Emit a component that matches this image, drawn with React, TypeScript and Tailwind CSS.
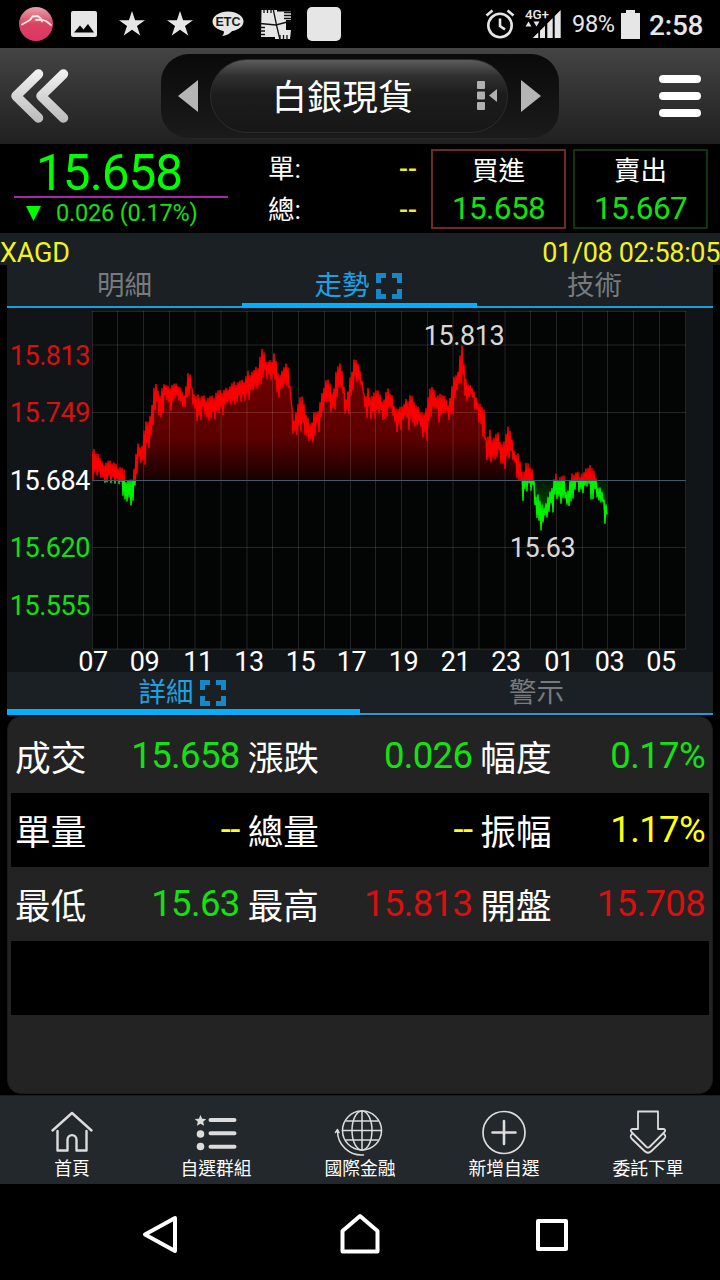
import React from 'react';

type Point = [number, number];

const HIGHS: Point[] = [
  [92, 450], [96, 449], [98, 452], [101, 461], [104, 463], [108, 461], [113, 461], [117, 465], [121, 466], [124, 470],
  [126, 479], [133, 480], [136, 458], [139, 444], [143, 445], [145, 430], [148, 418], [151, 415], [153, 405], [154, 395],
  [156, 382], [158, 390], [160, 402], [162, 390], [163, 382], [166, 385], [168, 389], [170, 384], [177, 384], [180, 387],
  [184, 397], [187, 385], [189, 373], [191, 377], [193, 392], [196, 397], [199, 395], [203, 396], [214, 396], [217, 391],
  [224, 390], [228, 388], [234, 382], [240, 381], [245, 380], [249, 371], [255, 370], [259, 365], [261, 355], [263, 349],
  [266, 360], [270, 362], [273, 358], [274, 351], [276, 360], [277, 375], [280, 373], [284, 369], [287, 364], [289, 365],
  [290, 385], [291, 397], [293, 420], [296, 415], [298, 405], [300, 402], [303, 390], [304, 402], [306, 415], [310, 422],
  [313, 422], [316, 408], [319, 410], [321, 402], [325, 385], [327, 379], [329, 380], [332, 393], [335, 388], [337, 372],
  [339, 362], [341, 361], [343, 380], [345, 395], [348, 400], [350, 380], [354, 370], [355, 357], [358, 364], [360, 368],
  [362, 380], [364, 394], [367, 398], [369, 382], [370, 396], [374, 396], [377, 387], [380, 395], [384, 400], [388, 389],
  [392, 394], [395, 412], [399, 406], [403, 407], [407, 397], [409, 405], [412, 391], [415, 405], [419, 408], [425, 415],
  [427, 400], [431, 388], [434, 387], [436, 397], [440, 395], [443, 393], [447, 402], [450, 402], [452, 390], [456, 373],
  [458, 378], [460, 365], [462, 346], [464, 360], [466, 378], [468, 387], [470, 383], [473, 389], [476, 398], [479, 400],
  [482, 407], [484, 410], [486, 435], [488, 442], [490, 430], [493, 438], [498, 433], [502, 443], [506, 441], [508, 428],
  [509, 422], [511, 438], [513, 442], [515, 453], [518, 453], [520, 462], [525, 472], [527, 463], [530, 465], [533, 470],
  [534, 480], [536, 490], [538, 492], [540, 500], [542, 505], [545, 508], [548, 500], [551, 492], [554, 481], [557, 474],
  [564, 476], [566, 490], [569, 490], [572, 475], [575, 473], [578, 472], [586, 472], [588, 466], [590, 463], [592, 468],
  [595, 473], [597, 478], [598, 488], [603, 488], [605, 507], [608, 503],
];

const LOWS: Point[] = [
  [92, 480], [97, 474], [103, 479], [106, 484], [119, 484], [122, 486], [124, 505], [128, 497], [131, 505], [134, 497],
  [136, 475], [139, 455], [141, 463], [144, 465], [147, 440], [149, 448], [151, 430], [153, 420], [156, 398], [158, 405],
  [160, 430], [162, 415], [164, 400], [167, 400], [170, 411], [173, 403], [175, 393], [179, 400], [182, 405], [184, 408],
  [187, 402], [190, 388], [193, 405], [197, 421], [200, 420], [202, 405], [207, 420], [216, 421], [219, 410], [222, 415],
  [226, 402], [230, 404], [236, 404], [242, 402], [248, 400], [252, 390], [258, 388], [262, 380], [275, 380], [277, 400],
  [282, 387], [287, 385], [289, 390], [291, 410], [292, 432], [294, 438], [298, 433], [304, 430], [306, 440], [313, 442],
  [316, 430], [319, 433], [321, 415], [326, 400], [331, 412], [335, 408], [338, 385], [341, 390], [344, 415], [348, 415],
  [351, 395], [354, 380], [362, 385], [364, 400], [367, 420], [375, 420], [380, 410], [384, 423], [388, 410], [392, 405],
  [394, 430], [397, 433], [401, 430], [404, 412], [409, 430], [411, 415], [415, 430], [418, 415], [421, 437], [427, 442],
  [429, 420], [433, 410], [436, 405], [439, 422], [443, 410], [447, 418], [450, 422], [453, 412], [456, 390], [463, 378],
  [466, 404], [470, 390], [474, 408], [477, 415], [481, 431], [484, 440], [487, 460], [491, 462], [495, 458], [500, 460],
  [503, 473], [507, 460], [511, 455], [515, 465], [518, 484], [521, 478], [523, 504], [526, 493], [533, 490], [535, 505],
  [536, 525], [538, 505], [540, 536], [543, 515], [547, 517], [550, 505], [552, 514], [555, 495], [559, 504], [562, 504],
  [565, 495], [566, 507], [569, 505], [571, 503], [573, 493], [577, 485], [580, 497], [584, 490], [588, 483], [592, 505],
  [594, 483], [597, 500], [600, 500], [603, 510], [605, 525], [608, 507],
];

const valueAt = (points: Point[], x: number) => {
  const i = points.findIndex((p) => p[0] >= x);
  if (i <= 0) return points[0][1];
  const [x0, y0] = points[i - 1];
  const [x1, y1] = points[i];
  return y0 + ((y1 - y0) * (x - x0)) / (x1 - x0);
};

const BASE = 480;

const buildSeries = () => {
  const line: string[] = [];
  const area: string[] = [`92,${BASE}`];
  for (let x = 92; x <= 606; x += 2) {
    const hi = Math.min(valueAt(HIGHS, x), valueAt(HIGHS, x + 1));
    const lo = Math.max(valueAt(LOWS, x), valueAt(LOWS, x + 1));
    const a = ((x * 37) % 11) / 11;
    const b = ((x * 29) % 13) / 13;
    const top = hi + (lo - hi) * a * a * 0.25;
    const bottom = lo - (lo - hi) * b * b * 0.45;
    line.push(`${x},${top.toFixed(1)}`, `${x + 1},${bottom.toFixed(1)}`);
    area.push(`${x},${((top + bottom) / 2).toFixed(1)}`);
  }
  area.push(`607,${BASE}`);
  return { line: line.join(' '), area: area.join(' ') };
};

const series = buildSeries();

const V_LINES = [92.5, 117.5, 143.5, 169.5, 195, 221, 247, 272.5, 298.5, 324.5, 350.5, 375.5, 401.5, 427.5, 453, 479, 505, 530.5, 556.5, 582.5, 607.5, 633.5, 659.5, 685.5];
const H_LINES = [311.5, 345, 412.5, 547.5, 615, 649];

const Y_LABELS = [
  { text: '15.813', y: 365, color: '#d81010' },
  { text: '15.749', y: 422, color: '#d81010' },
  { text: '15.684', y: 490, color: '#ffffff' },
  { text: '15.620', y: 557, color: '#12e012' },
  { text: '15.555', y: 615, color: '#12e012' },
];

const X_LABELS = [
  ['07', 93], ['09', 144.5], ['11', 198], ['13', 249], ['15', 300.5], ['17', 351.5],
  ['19', 403.5], ['21', 455.5], ['23', 506], ['01', 559], ['03', 609.5], ['05', 661],
] as const;

const PriceChart: React.FC = () => (
  <svg width="706" height="364" viewBox="7 308 706 364" fontFamily="Roboto, sans-serif" fontSize="27" letterSpacing="-0.45" className="relative block overflow-visible">
    <defs>
      <linearGradient id="up" gradientUnits="userSpaceOnUse" x1="0" y1="346" x2="0" y2="480">
        <stop offset="0" stopColor="#780000" />
        <stop offset="0.68" stopColor="#5c0000" />
        <stop offset="1" stopColor="#160202" />
      </linearGradient>
      <linearGradient id="down" gradientUnits="userSpaceOnUse" x1="0" y1="480" x2="0" y2="530">
        <stop offset="0" stopColor="#031803" />
        <stop offset="1" stopColor="#007000" />
      </linearGradient>
      <clipPath id="above"><rect x="92" y="308" width="600" height="172" /></clipPath>
      <clipPath id="below"><rect x="92" y="480" width="600" height="180" /></clipPath>
    </defs>
    <rect x="92" y="311" width="594" height="338" fill="#030504" />
    <g clipPath="url(#above)">
      <polygon points={series.area} fill="url(#up)" />
    </g>
    <g clipPath="url(#below)">
      <polygon points={series.area} fill="url(#down)" />
    </g>
    <g stroke="#ffffff" strokeOpacity="0.13" strokeWidth="1">
      {V_LINES.map((x) => <line key={x} x1={x} x2={x} y1="311" y2="649" />)}
      {H_LINES.map((y) => <line key={y} x1="92" x2="686" y1={y} y2={y} />)}
    </g>
    <g clipPath="url(#above)">
      <polyline points={series.line} fill="none" stroke="#fb0000" strokeWidth="1.5" strokeLinejoin="round" />
    </g>
    <g clipPath="url(#below)">
      <polyline points={series.line} fill="none" stroke="#00f000" strokeWidth="1.5" strokeLinejoin="round" />
    </g>
    <line x1="92" x2="686" y1="480.5" y2="480.5" stroke="#3d5a6c" />
    {Y_LABELS.map((l) => (
      <text key={l.text} x="90" y={l.y} textAnchor="end" fill={l.color}>{l.text}</text>
    ))}
    {X_LABELS.map(([text, x]) => (
      <text key={text} x={x} y="671" textAnchor="middle" fill="#ffffff">{text}</text>
    ))}
    <text x="464" y="345" textAnchor="middle" fill="#d8d8d8">15.813</text>
    <text x="542.5" y="557" textAnchor="middle" fill="#d8d8d8">15.63</text>
  </svg>
);

const ExpandIcon = () => (
  <svg width="26" height="26" viewBox="0 0 26 26" fill="none" stroke="#1787c6" strokeWidth="5">
    <path d="M10 2.5H2.5V10M16 2.5h7.5V10M10 23.5H2.5V16M16 23.5h7.5V16" />
  </svg>
);

const StarIcon = () => (
  <svg width="26" height="26" viewBox="0 0 26 26" fill="#e6e6e6">
    <path d="M13 0l3.1 9.2H26l-8 5.7 3.2 9.6L13 18.7l-8.2 5.8L8 14.9 0 9.2h9.9z" />
  </svg>
);

const StatusBar = () => (
  <div className="flex h-12 items-center bg-black pr-4 pl-3 text-[#e6e6e6]">
    <div className="flex w-12 justify-center">
      <svg width="34" height="34" viewBox="0 0 34 34">
        <defs>
          <linearGradient id="ball" x1="0" y1="0" x2="0" y2="1">
            <stop offset="0" stopColor="#e9a3aa" />
            <stop offset="0.5" stopColor="#d9435f" />
            <stop offset="1" stopColor="#de3567" />
          </linearGradient>
        </defs>
        <circle cx="17" cy="17" r="17" fill="url(#ball)" />
        <path d="M3 17.500l8-4.500 2.500-3.500 5-.5 3 2 1.500 3.500M17 13l5-.5 5 1.500 5 4" fill="none" stroke="#fbe9ec" strokeWidth="1.800" strokeLinecap="round" strokeLinejoin="round" />
      </svg>
    </div>
    <div className="flex w-12 justify-center">
      <svg width="26" height="26" viewBox="0 0 26 26">
        <rect width="26" height="26" rx="2" fill="#e6e6e6" />
        <path d="M3 21.500l6-7 3.500 4L17 13l6 8.500z" fill="#000" />
      </svg>
    </div>
    <div className="flex w-12 justify-center"><StarIcon /></div>
    <div className="flex w-12 justify-center"><StarIcon /></div>
    <div className="flex w-12 justify-center">
      <svg width="32" height="26" viewBox="0 0 32 26" className="overflow-visible">
        <ellipse cx="16" cy="10.500" rx="15.500" ry="10" fill="#e6e6e6" />
        <path d="M11 18.500h10c-2 3.500-6 6-11 6.500 2-1.500 2.500-4 1-6.500z" fill="#e6e6e6" />
        <text x="16" y="15" textAnchor="middle" fontFamily="Liberation Sans, sans-serif" fontWeight="700" fontSize="12.500" fill="#1a1a1a">ETC</text>
      </svg>
    </div>
    <div className="flex w-12 justify-center">
      <svg width="32" height="32" viewBox="0 0 32 32">
        <path d="M1.500 2H17v1.500h14v8.500H26v10h5l-1 9H15V29H1z" fill="#e6e6e6" />
        <path d="M13 0l3.500 17L20 32M0 15.500l16 1.500 15-4" fill="none" stroke="#111" strokeWidth="1.300" />
        <path d="M4 0v5M7.500 0v5M11 0v5M24 4.500h7M24 7.500h7M24 10.500h7M0 19.500h5M0 23h5M0 26.500h5M20 27v5M23.500 27v5M27 27v5" stroke="#111" strokeWidth="1.300" />
      </svg>
    </div>
    <div className="flex w-12 justify-center">
      <div className="size-[34px] rounded-[5px] bg-[#e6e6e6]" />
    </div>
    <div className="ml-auto flex items-center">
      <svg width="30" height="30" viewBox="0 0 30 30" fill="none" stroke="#e6e6e6" strokeWidth="2.600">
        <circle cx="15" cy="16.500" r="11.700" />
        <path d="M15 9.500v7.500l5 3.500M1.500 6.500l6-5M28.500 6.500l-6-5" />
      </svg>
      <svg width="37" height="30" viewBox="0 0 37 30" fill="#e6e6e6" className="mr-[1px] ml-[10px] overflow-visible">
        <text x="0" y="9.500" fontFamily="Roboto, sans-serif" fontWeight="500" fontSize="13.500" letterSpacing="-0.2">4G+</text>
        <path d="M.5 17.500h6l-3-5zM8.500 12.500h6l-3 5zM7.700 29l5.600-5.600V29zM15 21.700l5-5V29h-5zM22.300 14.400l5.400-5.400v20h-5.400zM29.700 7l6-6v28h-6z" />
      </svg>
      <span className="ml-[9px] w-[44px] pt-[2px] text-[23.5px] leading-none tracking-[-0.3px] whitespace-nowrap">98%</span>
      <svg width="19" height="29" viewBox="0 0 19 29" fill="#e6e6e6" className="ml-[5px]">
        <path d="M5 0h9v3h5v26H0V3h5z" />
      </svg>
      <span className="ml-[9px] w-[55px] pt-[3px] text-[28px] leading-none font-medium tracking-[-0.2px] whitespace-nowrap">2:58</span>
    </div>
  </div>
);

const Header = () => (
  <div className="flex h-24 items-center justify-between bg-linear-to-b from-[#444444] to-[#202020] pr-[19px] pl-[10px]">
    <svg width="60" height="56" viewBox="0 0 60 56" fill="none" strokeWidth="9.500" strokeLinecap="round" strokeLinejoin="round">
      <defs>
        <linearGradient id="chev" gradientUnits="userSpaceOnUse" x1="0" y1="0" x2="0" y2="56">
          <stop offset="0" stopColor="#f4f4f4" />
          <stop offset="1" stopColor="#b9b9b9" />
        </linearGradient>
      </defs>
      <path d="M28.500 6L6 28l22.500 22M53.500 6L31 28l22.500 22" stroke="url(#chev)" />
    </svg>
    <div className="mr-[10px] flex h-[85px] w-[398px] items-center justify-between rounded-[28px] border-b border-[#262626] bg-linear-to-b from-[#0a0a0a] to-[#1b1b1b] pr-[17px] pl-[16px]">
      <svg width="21" height="32" viewBox="0 0 21 32" fill="#b5b5b5"><path d="M21 0v32L1 16z" /></svg>
      <div className="flex h-[74px] w-[298px] items-center justify-end rounded-full border border-[#2c2c2c] bg-[linear-gradient(#5c5c5c_0%,#303030_22%,#1c1c1c_48%,#171717_100%)] pr-[9px]">
        <span className="mr-[64px] pt-[4px] text-[35.3px] leading-[70px] whitespace-nowrap text-white">白銀現貨</span>
        <svg width="21" height="30" viewBox="0 0 21 30" fill="#b0b0b0">
          <rect width="8" height="8" rx="1" />
          <rect y="10.500" width="8" height="8" rx="1" />
          <rect y="21" width="8" height="8" rx="1" />
          <path d="M20 8v13l-8-6.500z" />
        </svg>
      </div>
      <svg width="21" height="32" viewBox="0 0 21 32" fill="#b5b5b5"><path d="M0 0v32l20-16z" /></svg>
    </div>
    <div className="flex w-[42px] flex-col gap-[9px]">
      <div className="h-2 rounded-full bg-white" />
      <div className="h-2 rounded-full bg-white" />
      <div className="h-2 rounded-full bg-white" />
    </div>
  </div>
);

const QuoteBox: React.FC<{ label: string; price: string; sell?: boolean }> = ({ label, price, sell }) => (
  <div className={`h-20 w-[135px] border-2 text-center ${sell ? 'border-[#12350f]' : 'border-[#70292a]'}`}>
    <div className="h-[38px] text-[26.5px] leading-[40px] text-white">{label}</div>
    <div className="h-[38px] text-[31.5px] leading-[40px] tracking-[-0.6px] text-[#14e114]">{price}</div>
  </div>
);

const QuoteBar = () => (
  <div className="flex h-[89px] bg-black">
    <div className="w-[228px] pl-[14px]">
      <div className="h-[54px] border-b-2 border-[#a526a8] pl-[22px] text-[49.5px] leading-[58px] tracking-[-1px] text-[#00ff00]">15.658</div>
      <div className="flex h-[30px] items-center pl-3 text-[#14e114]">
        <svg width="15" height="15" viewBox="0 0 15 15" fill="#00ff00"><path d="M0 0h15L7.500 15z" /></svg>
        <span className="ml-[15px] text-[23.5px] leading-[30px] tracking-[-0.2px] whitespace-nowrap">0.026 (0.17%)</span>
      </div>
    </div>
    <div className="ml-[40px] w-[149px] text-[26.5px] text-white">
      <div className="flex h-[41px] justify-between leading-[50px]"><span>單:</span><span className="font-medium text-[#eded20]">--</span></div>
      <div className="flex h-[41px] justify-between leading-[50px]"><span>總:</span><span className="font-medium text-[#eded20]">--</span></div>
    </div>
    <div className="mt-[5px] ml-[14px] flex gap-[7px]">
      <QuoteBox label="買進" price="15.658" />
      <QuoteBox label="賣出" price="15.667" sell />
    </div>
  </div>
);

const CELLS = [
  ['成交', '15.658', 'g'], ['漲跌', '0.026', 'g'], ['幅度', '0.17%', 'g'],
  ['單量', '--', 'y'], ['總量', '--', 'y'], ['振幅', '1.17%', 'y'],
  ['最低', '15.63', 'g'], ['最高', '15.813', 'r'], ['開盤', '15.708', 'r'],
];

const VALUE_COLORS: Record<string, string> = {
  g: 'text-[#14e114]',
  y: 'text-[#ffff10]',
  r: 'text-[#d81010]',
};

const DetailRow: React.FC<{ cells: string[][]; dark?: boolean }> = ({ cells, dark }) => (
  <div className={`grid h-[74px] grid-cols-3 ${dark ? 'bg-black' : ''}`}>
    {cells.map(([label, value, color]) => (
      <div key={label} className="flex items-start justify-between pr-[4px] pl-[4px]">
        <span className="text-[35.7px] leading-[80px] text-white">{label}</span>
        <span className={`text-[36.5px] leading-[74px] tracking-[-0.65px] ${VALUE_COLORS[color]}`}>{value}</span>
      </div>
    ))}
  </div>
);

const iconProps = { width: 48, height: 48, viewBox: '0 0 48 48', fill: 'none', stroke: '#dcdcdc', strokeLinecap: 'round', strokeLinejoin: 'round' } as const;

const NAV_ITEMS = [
  {
    label: '首頁',
    icon: (
      <svg {...iconProps} strokeWidth="2.400">
        <path d="M4.500 22.500L24 5l19.500 17.500M9.500 23v19.500h10V32c0-6.500 9-6.500 9 0v10.500h10V23" />
      </svg>
    ),
  },
  {
    label: '自選群組',
    icon: (
      <svg {...iconProps} stroke="none">
        <path d="M8.500 7l1.700 3.700 4 .4-3 2.700.9 4-3.600-2.100-3.600 2.100.9-4-3-2.700 4-.4z" fill="#dcdcdc" />
        <circle cx="8.500" cy="26" r="3.800" fill="#dcdcdc" />
        <circle cx="8.500" cy="38.500" r="3.800" fill="#dcdcdc" />
        <path d="M18.500 12h24M18.500 25.200h24M18.500 38.700h24" stroke="#dcdcdc" strokeWidth="4" />
      </svg>
    ),
  },
  {
    label: '國際金融',
    icon: (
      <svg {...iconProps} strokeWidth="1.500" className="overflow-visible">
        <circle cx="26" cy="22.500" r="19.500" />
        <ellipse cx="26" cy="22.500" rx="10" ry="19.500" />
        <path d="M26 3v39M6.500 22.500h39M10 13h32M10 32h32M1.500 23c0 14 12 25 26 24M-.5 24.500l2-3 1.500 3" />
      </svg>
    ),
  },
  {
    label: '新增自選',
    icon: (
      <svg {...iconProps} strokeWidth="1.700">
        <circle cx="24" cy="24.500" r="21" />
        <path d="M24 13v23M12.500 24.500h23" strokeWidth="2.600" />
      </svg>
    ),
  },
  {
    label: '委託下單',
    icon: (
      <svg {...iconProps} strokeWidth="1.800">
        <path d="M14 3.500h20V21h5c2 0 3 1.500 1.500 3L26 38.500c-1.500 1.500-2.500 1.500-4 0L7.500 24c-1.500-1.500-.5-3 1.500-3h5z" />
        <path d="M8 26c-2 2-2 3 0 5l12.500 12c2.500 2.500 4.500 2.500 7 0L40 31c2-2 2-3 0-5" />
      </svg>
    ),
  },
];

const BottomNav = () => (
  <div className="mt-[1px] grid h-[89px] grid-cols-5 border-t border-[#191d20] bg-[#23282c] text-white">
    {NAV_ITEMS.map((item) => (
      <div key={item.label} className="flex flex-col items-center pt-[12px]">
        {item.icon}
        <span className="pt-[1px] text-[17.8px] leading-6 whitespace-nowrap">{item.label}</span>
      </div>
    ))}
  </div>
);

const App: React.FC = () => {
  return (
    <div lang="zh-Hant" className="flex h-[1280px] w-[720px] flex-col overflow-hidden bg-black font-[Roboto,'Noto_Sans_CJK_TC',sans-serif]">
      <StatusBar />
      <Header />
      <QuoteBar />

      <div className="flex h-8 justify-between bg-[#1a2024] text-[27px] leading-[41px] whitespace-nowrap text-[#f2f220]">
        <span className="tracking-[-0.2px]">XAGD</span>
        <span className="tracking-[-0.35px]">01/08 02:58:05</span>
      </div>

      <div className="mx-[7px] flex h-[43px] bg-[#1a2024] text-[27.5px] leading-[42px] text-[#777b7d]">
        <div className="w-[235px] border-b-2 border-[#1a9fdc] text-center">明細</div>
        <div className="flex w-[235px] items-center justify-center gap-[6px] border-b-[5px] border-[#00b0ff] pt-[3px] pr-[3px] text-[#1da1e2]">
          <span>走勢</span>
          <ExpandIcon />
        </div>
        <div className="w-[236px] border-b-2 border-[#1a9fdc] pr-[1px] text-center">技術</div>
      </div>

      <div className="mx-[7px] bg-[#111518]">
        <PriceChart />
      </div>

      <div className="mx-[7px] flex h-[43px] bg-[#1a2024] text-[27.5px] leading-[42px] text-[#777b7d]">
        <div className="flex w-[353px] items-center justify-center gap-[6px] border-b-[6px] border-[#00b0ff] pt-[4px] pr-[3px] text-[#1da1e2]">
          <span>詳細</span>
          <ExpandIcon />
        </div>
        <div className="w-[353px] border-b-2 border-[#1a9fdc] text-center">警示</div>
      </div>

      <div className="mx-[7px] mt-[1px] h-[378px] rounded-[14px] border border-[#1a1a1a] bg-[#232323] px-[3px] pt-[2px]">
        <DetailRow cells={CELLS.slice(0, 3)} />
        <DetailRow cells={CELLS.slice(3, 6)} dark />
        <DetailRow cells={CELLS.slice(6, 9)} />
        <DetailRow cells={[]} dark />
      </div>

      <BottomNav />

      <div className="flex h-24 items-center bg-black pt-[6px] pl-[140px]">
        <svg width="40" height="44" viewBox="0 0 40 44" fill="none" stroke="#ffffff" strokeWidth="4" strokeLinejoin="round">
          <path d="M35 5v33L5 21.500z" />
        </svg>
        <svg width="44" height="44" viewBox="0 0 44 44" fill="none" stroke="#ffffff" strokeWidth="4" strokeLinejoin="round" className="ml-[158px]">
          <path d="M22 3L4.500 18v20.500h35V18z" />
        </svg>
        <svg width="40" height="40" viewBox="0 0 40 40" fill="none" stroke="#ffffff" strokeWidth="4" strokeLinejoin="round" className="ml-[150px]">
          <rect x="6" y="6" width="28" height="28" />
        </svg>
      </div>
    </div>
  );
};

export default App;
